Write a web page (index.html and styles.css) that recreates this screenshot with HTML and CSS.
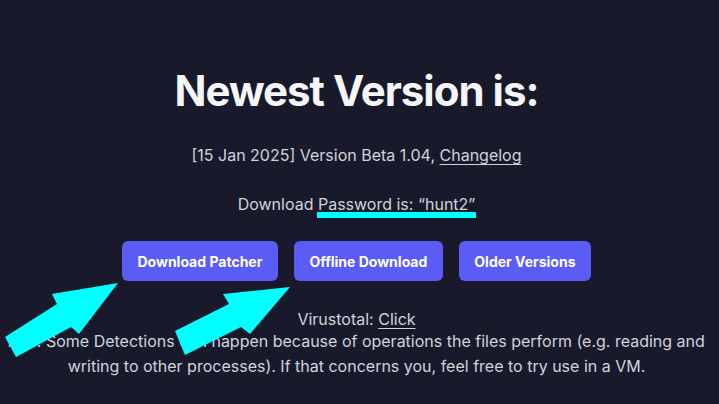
FILE: index.html
```html
<!DOCTYPE html>
<html lang="en">
<head>
<meta charset="utf-8">
<title>Newest Version</title>
<link rel="stylesheet" href="styles.css">
</head>
<body>
<main class="page">
  <h1 class="title">Newest Version is:</h1>
  <p class="meta">[15 Jan 2025] Version Beta 1.04, <a class="link" href="#">Changelog</a></p>
  <p class="password">Download <span class="mark">Password is: “hunt2”</span></p>
  <div class="actions">
    <a class="btn" href="#">Download Patcher</a>
    <a class="btn" href="#">Offline Download</a>
    <a class="btn" href="#">Older Versions</a>
  </div>
  <p class="virus">Virustotal: <a class="link" href="#">Click</a></p>
  <p class="note">AVs. Some Detections can happen because of operations the files perform (e.g. reading and writing to other processes). If that concerns you, feel free to try use in a VM.</p>
</main>
<svg class="arrows" width="719" height="404" viewBox="0 0 719 404" aria-hidden="true">
  <polygon fill="#00ffff" points="118,283 52,294 57,304 5,337 16,357 71,327 79,334"/>
  <polygon fill="#00ffff" points="290,287 223,294 229,304 175,331 185,355 241,327 250,334"/>
</svg>
</body>
</html>
```
FILE: styles.css
```css
html, body {
  margin: 0;
  padding: 0;
  background: #181a2b;
}
body {
  font-family: Inter, "Noto Sans", sans-serif;
  color: #cfd3dc;
  width: 719px;
  height: 404px;
  overflow: hidden;
  position: relative;
}
.page {
  display: flex;
  flex-direction: column;
  align-items: center;
  text-align: center;
  padding: 67px 6px 0 0;
}
.title {
  margin: 0;
  font-size: 42px;
  line-height: 48px;
  font-weight: 700;
  color: #f3f5f9;
  letter-spacing: -1px;
}
.meta {
  margin: 28px 0 0;
  font-size: 16px;
  line-height: 24px;
}
.password {
  margin: 25px 0 0;
  font-size: 16px;
  line-height: 24px;
}
.link {
  color: inherit;
  text-decoration: underline;
  text-underline-offset: 3px;
}
.mark {
  position: relative;
}
.mark::after {
  content: "";
  position: absolute;
  left: -1px;
  right: -1px;
  bottom: -4px;
  height: 6px;
  background: #00ffff;
}
.actions {
  display: flex;
  gap: 16px;
  margin-top: 25px;
}
.btn {
  display: block;
  height: 40px;
  box-sizing: border-box;
  padding: 11px 15.5px 9px;
  background: #5b5bf6;
  color: #ffffff;
  border-radius: 6px;
  font-size: 14px;
  line-height: 20px;
  font-weight: 700;
  text-decoration: none;
}
.virus {
  margin: 28px 0 0;
  font-size: 16px;
  line-height: 20px;
}
.note {
  margin: 0;
  font-size: 16px;
  line-height: 24.5px;
}
.arrows {
  position: absolute;
  left: 0;
  top: 0;
}
```
